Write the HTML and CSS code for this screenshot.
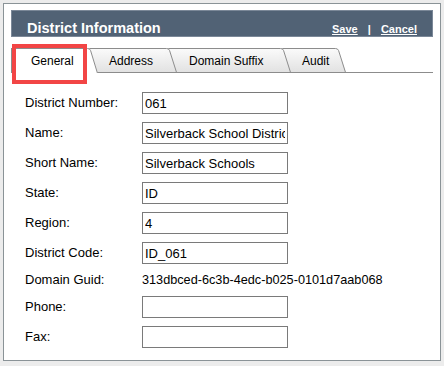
FILE: index.html
```html
<!DOCTYPE html>
<html lang="en">
  <head>
    <meta charset="UTF-8" />
    <title>District Information</title>
    <link rel="stylesheet" href="styles.css">
  </head>
  <body>
    <div class="panel">
      <div class="panel-header">
        <span class="panel-title">District Information</span>
        <span class="panel-actions">
          <a href="#" class="action-link">Save</a>
          <span class="action-sep">|</span>
          <a href="#" class="action-link">Cancel</a>
        </span>
      </div>

      <div class="tabs">
        <div class="tab tab-active tab-general">
          <span class="tab-label">General</span>
          <svg class="tab-edge" viewBox="0 0 12 25" preserveAspectRatio="none">
            <path d="M0 0 H1.5 Q3.8 0 4.6 2.4 L11.6 25 H0 Z" fill="#fff" />
            <path d="M0 0.5 H1.5 Q3.8 0.5 4.6 2.6 L11.4 25" fill="none" stroke="#8c8c8c" />
          </svg>
        </div>
        <div class="tab tab-address">
          <span class="tab-label">Address</span>
          <svg class="tab-edge" viewBox="0 0 12 24">
            <defs>
              <linearGradient id="tabfill" x1="0" y1="0" x2="0" y2="1">
                <stop offset="0" stop-color="#fafafa" />
                <stop offset="1" stop-color="#e2e2e2" />
              </linearGradient>
            </defs>
            <path d="M0 0 H1.5 Q3.8 0 4.6 2.4 L11.6 24 H0 Z" fill="url(#tabfill)" />
            <path d="M0 0.5 H1.5 Q3.8 0.5 4.6 2.6 L11.4 24" fill="none" stroke="#8c8c8c" />
          </svg>
        </div>
        <div class="tab tab-domain">
          <span class="tab-label">Domain Suffix</span>
          <svg class="tab-edge" viewBox="0 0 12 24">
            <path d="M0 0 H1.5 Q3.8 0 4.6 2.4 L11.6 24 H0 Z" fill="url(#tabfill)" />
            <path d="M0 0.5 H1.5 Q3.8 0.5 4.6 2.6 L11.4 24" fill="none" stroke="#8c8c8c" />
          </svg>
        </div>
        <div class="tab tab-audit">
          <span class="tab-label">Audit</span>
          <svg class="tab-edge" viewBox="0 0 12 24">
            <path d="M0 0 H1.5 Q3.8 0 4.6 2.4 L11.6 24 H0 Z" fill="url(#tabfill)" />
            <path d="M0 0.5 H1.5 Q3.8 0.5 4.6 2.6 L11.4 24" fill="none" stroke="#8c8c8c" />
          </svg>
        </div>
        <div class="tab-highlight"></div>
      </div>

      <div class="form-grid">
        <label class="field-label">District Number:</label>
        <input class="field-input" type="text" value="061" />

        <label class="field-label">Name:</label>
        <input class="field-input" type="text" value="Silverback School District" />

        <label class="field-label">Short Name:</label>
        <input class="field-input" type="text" value="Silverback Schools" />

        <label class="field-label">State:</label>
        <input class="field-input" type="text" value="ID" />

        <label class="field-label">Region:</label>
        <input class="field-input" type="text" value="4" />

        <label class="field-label">District Code:</label>
        <input class="field-input" type="text" value="ID_061" />

        <label class="field-label">Domain Guid:</label>
        <span class="field-value">313dbced-6c3b-4edc-b025-0101d7aab068</span>

        <label class="field-label">Phone:</label>
        <input class="field-input" type="text" value="" />

        <label class="field-label">Fax:</label>
        <input class="field-input" type="text" value="" />
      </div>
    </div>
  </body>
</html>
```

FILE: styles.css
```css
body {
  margin: 0;
  padding: 3px;
  background: #ececec;
  font-family: "Liberation Sans", Arial, sans-serif;
  color: #000;
}

.panel {
  box-sizing: border-box;
  width: 438px;
  height: 358px;
  border: 1px solid #8a9397;
  background: #fff;
  padding: 6px 7px;
}

.panel-header {
  box-sizing: border-box;
  height: 27px;
  display: flex;
  justify-content: space-between;
  align-items: baseline;
  padding: 9px 15px 0 15px;
  background: #516275;
  border: 1px solid #7b8898;
  color: #fff;
  line-height: 16px;
}

.panel-title {
  font-size: 14.5px;
  font-weight: 700;
}

.panel-actions {
  font-size: 11px;
  font-weight: 700;
}

.action-link {
  color: #fff;
  text-decoration: underline;
}

.action-sep {
  margin: 0 7px;
}

/* tab strip */
.tabs {
  position: relative;
  display: flex;
  align-items: flex-start;
  margin-top: 11px;
  border-bottom: 1px solid #8c8c8c;
}

.tab {
  position: relative;
  display: flex;
  height: 24px;
  margin-left: -12px;
}

.tab-label {
  box-sizing: border-box;
  height: 100%;
  display: flex;
  align-items: center;
  font-size: 12px;
  border-top: 1px solid #8c8c8c;
  border-left: 1px solid #8c8c8c;
  background: linear-gradient(#fafafa, #e2e2e2);
}

.tab-edge {
  width: 12px;
  height: 100%;
}

.tab-active {
  height: 25px;
  margin-bottom: -1px;
}

.tab-active .tab-label {
  background: #fff;
}

.tab-general {
  margin-left: 0;
  z-index: 4;
}
.tab-general .tab-label {
  width: 75px;
  padding-left: 19px;
}

.tab-address {
  z-index: 3;
}
.tab-address .tab-label {
  width: 79px;
  padding-left: 22px;
}

.tab-domain {
  z-index: 2;
}
.tab-domain .tab-label {
  width: 114px;
  padding-left: 23px;
}

.tab-audit {
  z-index: 1;
}
.tab-audit .tab-label {
  width: 55px;
  padding-left: 22px;
}

.tab-highlight {
  position: absolute;
  left: 1px;
  top: -4px;
  width: 75px;
  height: 40px;
  box-sizing: border-box;
  border: 4px solid #f24545;
  z-index: 10;
}

/* form */
.form-grid {
  display: grid;
  grid-template-columns: 117px 146px;
  row-gap: 8px;
  align-items: center;
  padding: 19px 0 0 14px;
}

.field-label {
  font-size: 13px;
  line-height: 16px;
}

.field-value {
  font-size: 12.7px;
  line-height: 16px;
  white-space: nowrap;
}

.field-input {
  box-sizing: border-box;
  width: 146px;
  height: 22px;
  margin: 0;
  padding: 0 2px;
  border: 1px solid #7a7a7a;
  font-family: "Liberation Sans", Arial, sans-serif;
  font-size: 13px;
  color: #000;
  background: #fff;
}
```
